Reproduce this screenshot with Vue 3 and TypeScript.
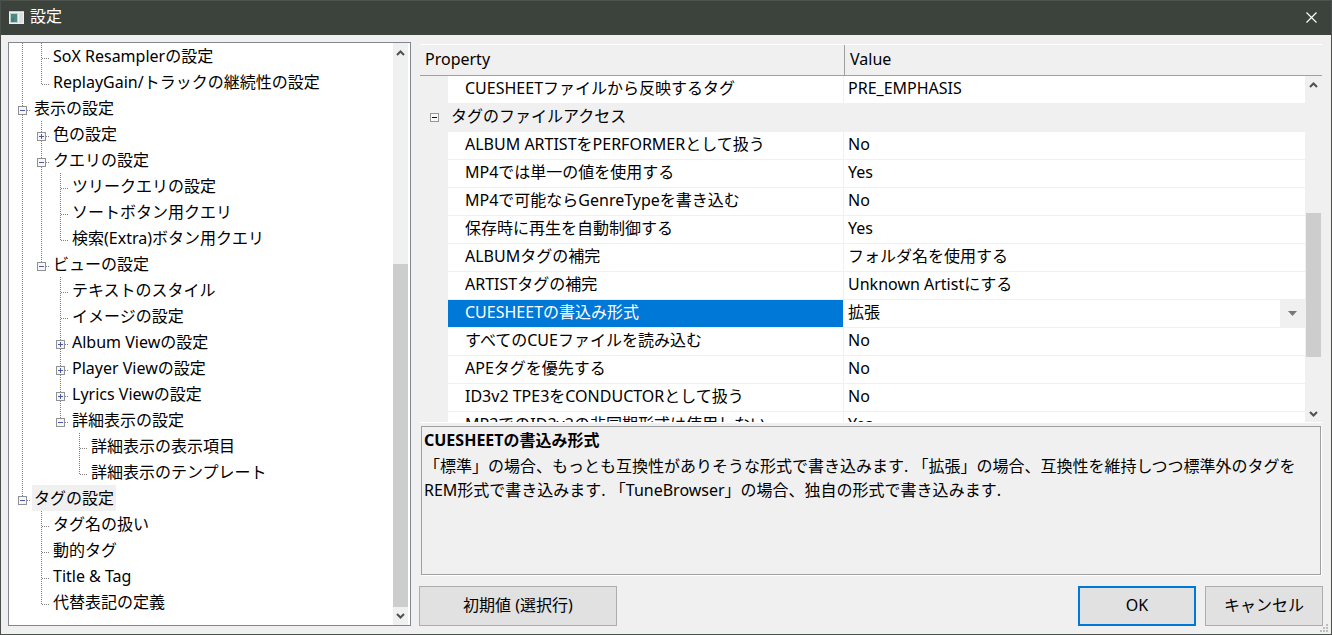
<script setup lang="ts">
import { ref } from 'vue'

type Guide = 'none' | 'line' | 'tee' | 'end' | 'plus' | 'minus' | 'minus-end'

interface TreeNode {
  label: string
  guides: Guide[]
}

interface PropertyRow {
  name: string
  value: string
}

const nodes: TreeNode[] = [
  { label: 'SoX Resamplerの設定', guides: ['line', 'tee'] },
  { label: 'ReplayGain/トラックの継続性の設定', guides: ['line', 'end'] },
  { label: '表示の設定', guides: ['minus'] },
  { label: '色の設定', guides: ['line', 'plus'] },
  { label: 'クエリの設定', guides: ['line', 'minus'] },
  { label: 'ツリークエリの設定', guides: ['line', 'line', 'tee'] },
  { label: 'ソートボタン用クエリ', guides: ['line', 'line', 'tee'] },
  { label: '検索(Extra)ボタン用クエリ', guides: ['line', 'line', 'end'] },
  { label: 'ビューの設定', guides: ['line', 'minus-end'] },
  { label: 'テキストのスタイル', guides: ['line', 'none', 'tee'] },
  { label: 'イメージの設定', guides: ['line', 'none', 'tee'] },
  { label: 'Album Viewの設定', guides: ['line', 'none', 'plus'] },
  { label: 'Player Viewの設定', guides: ['line', 'none', 'plus'] },
  { label: 'Lyrics Viewの設定', guides: ['line', 'none', 'plus'] },
  { label: '詳細表示の設定', guides: ['line', 'none', 'minus-end'] },
  { label: '詳細表示の表示項目', guides: ['line', 'none', 'none', 'tee'] },
  { label: '詳細表示のテンプレート', guides: ['line', 'none', 'none', 'end'] },
  { label: 'タグの設定', guides: ['minus-end'] },
  { label: 'タグ名の扱い', guides: ['none', 'tee'] },
  { label: '動的タグ', guides: ['none', 'tee'] },
  { label: 'Title & Tag', guides: ['none', 'tee'] },
  { label: '代替表記の定義', guides: ['none', 'end'] },
]

const rowsBefore: PropertyRow[] = [
  { name: 'CUESHEETファイルから反映するタグ', value: 'PRE_EMPHASIS' },
]

const rows: PropertyRow[] = [
  { name: 'ALBUM ARTISTをPERFORMERとして扱う', value: 'No' },
  { name: 'MP4では単一の値を使用する', value: 'Yes' },
  { name: 'MP4で可能ならGenreTypeを書き込む', value: 'No' },
  { name: '保存時に再生を自動制御する', value: 'Yes' },
  { name: 'ALBUMタグの補完', value: 'フォルダ名を使用する' },
  { name: 'ARTISTタグの補完', value: 'Unknown Artistにする' },
  { name: 'CUESHEETの書込み形式', value: '拡張' },
  { name: 'すべてのCUEファイルを読み込む', value: 'No' },
  { name: 'APEタグを優先する', value: 'No' },
  { name: 'ID3v2 TPE3をCONDUCTORとして扱う', value: 'No' },
  { name: 'MP3でのID3v2の非同期形式は使用しない', value: 'Yes' },
]

const selectedNode = ref('タグの設定')
const selectedRow = ref('CUESHEETの書込み形式')
const format = ref('拡張')

const isBox = (g: Guide) => g === 'plus' || g === 'minus' || g === 'minus-end'
const isEnd = (g: Guide) => g === 'end' || g === 'minus-end'
</script>

<template>
  <div class="window">
    <header class="titlebar">
      <svg class="app-icon" width="15" height="13" viewBox="0 0 15 13" aria-hidden="true">
        <rect width="15" height="13" fill="#eef1ef" />
        <rect x="1" y="2" width="8" height="10" fill="#b9cfc9" />
        <rect x="2" y="3" width="6" height="8" fill="#4d8a80" />
        <rect x="2" y="7" width="3" height="4" fill="#457a8c" />
        <rect x="10" y="2" width="4" height="10" fill="#dcdfe2" />
        <rect width="15" height="1" fill="#c3cac6" />
      </svg>
      <h1>設定</h1>
      <button class="close" type="button" aria-label="閉じる">
        <svg width="11" height="11" viewBox="0 0 11 11">
          <path d="M0.5 0.5 10.5 10.5M10.5 0.5 0.5 10.5" stroke="#fff" stroke-width="1.2" />
        </svg>
      </button>
    </header>

    <main class="content">
      <nav class="tree-box">
        <ul class="tree">
          <li v-for="node in nodes" :key="node.label">
            <template v-for="(g, i) in node.guides" :key="i">
              <component
                :is="isBox(g) ? 'button' : 'span'"
                class="guide"
                :type="isBox(g) ? 'button' : undefined"
                :aria-label="isBox(g) ? node.label + 'の開閉' : undefined"
              >
                <svg width="19" height="26" viewBox="0 0 19 26" fill="none">
                  <g stroke="#808080" stroke-dasharray="1 1">
                    <path v-if="g !== 'none'" :d="isEnd(g) ? 'M9.5 0V16' : 'M9.5 0V26'" />
                    <path v-if="g !== 'none' && g !== 'line'" d="M10 15.5H18" />
                  </g>
                  <g v-if="isBox(g)">
                    <rect x="5.5" y="11.5" width="8" height="8" fill="#f6f6f6" stroke="#919191" />
                    <path d="M7 15.5H12" stroke="#4b5aa3" />
                    <path v-if="g === 'plus'" d="M9.5 13V18" stroke="#4b5aa3" />
                  </g>
                </svg>
              </component>
            </template>
            <button
              type="button"
              class="node"
              :class="{ current: node.label === selectedNode }"
              @click="selectedNode = node.label"
            >{{ node.label }}</button>
          </li>
        </ul>
        <div class="scrollbar tree-scroll" aria-hidden="true">
          <svg class="arrow" viewBox="0 0 15 18"><path d="M4 12 7.5 8.5 11 12" /></svg>
          <div class="track">
            <span class="tree-before"></span><span class="tree-thumb"></span>
          </div>
          <svg class="arrow" viewBox="0 0 15 18"><path d="M4 7 7.5 10.5 11 7" /></svg>
        </div>
      </nav>

      <section class="side">
        <div class="properties">
          <div class="viewport">
            <table>
              <colgroup>
                <col class="c-gutter" /><col class="c-name" /><col />
              </colgroup>
              <thead>
                <tr><th colspan="2" scope="col">Property</th><th scope="col">Value</th></tr>
              </thead>
              <tbody>
                <tr v-for="row in rowsBefore" :key="row.name">
                  <td class="gutter"></td>
                  <td class="name">{{ row.name }}</td>
                  <td class="value">{{ row.value }}</td>
                </tr>
                <tr class="group">
                  <td class="gutter">
                    <button type="button" class="fold" aria-label="タグのファイルアクセスの開閉">
                      <svg width="9" height="9" viewBox="0 0 9 9">
                        <rect x="0.5" y="0.5" width="8" height="8" fill="#f7f7f7" stroke="#989898" />
                        <path d="M2 4.5H7" stroke="#111" />
                      </svg>
                    </button>
                  </td>
                  <th colspan="2" scope="rowgroup">タグのファイルアクセス</th>
                </tr>
                <tr
                  v-for="row in rows"
                  :key="row.name"
                  :class="{ selected: row.name === selectedRow }"
                >
                  <td class="gutter"></td>
                  <td class="name">
                    <label v-if="row.name === selectedRow" for="format">{{ row.name }}</label>
                    <template v-else>{{ row.name }}</template>
                  </td>
                  <td class="value">
                    <div v-if="row.name === selectedRow" class="combo">
                      <select id="format" v-model="format">
                        <option>標準</option>
                        <option>拡張</option>
                        <option>TuneBrowser</option>
                      </select>
                      <span class="drop">
                        <svg width="9" height="5" viewBox="0 0 9 5"><path d="M0 0H9L4.5 5Z" fill="#777" /></svg>
                      </span>
                    </div>
                    <template v-else>{{ row.value }}</template>
                  </td>
                </tr>
              </tbody>
            </table>
          </div>
          <div class="rail">
            <div class="corner"></div>
            <div class="scrollbar" aria-hidden="true">
              <svg class="arrow" viewBox="0 0 15 18"><path d="M4 11 7.5 7.5 11 11" /></svg>
              <div class="track">
                <span class="list-before"></span><span class="list-thumb"></span><span class="list-after"></span>
              </div>
              <svg class="arrow" viewBox="0 0 15 18"><path d="M4 8 7.5 11.5 11 8" /></svg>
            </div>
          </div>
        </div>

        <article class="description">
          <h2>CUESHEETの書込み形式</h2>
          <p>「標準」の場合、もっとも互換性がありそうな形式で書き込みます. 「拡張」の場合、互換性を維持しつつ標準外のタグをREM形式で書き込みます. 「TuneBrowser」の場合、独自の形式で書き込みます.</p>
        </article>

        <footer class="actions">
          <button type="button" class="push reset">初期値 (選択行)</button>
          <button type="button" class="push primary">OK</button>
          <button type="button" class="push">キャンセル</button>
        </footer>
      </section>
    </main>

    <svg class="grip" width="8" height="8" viewBox="0 0 8 8" fill="#bdbdbd" aria-hidden="true">
      <path d="M6 0h2v2H6zM3 3h2v2H3zM6 3h2v2H6zM0 6h2v2H0zM3 6h2v2H3zM6 6h2v2H6z" />
    </svg>
  </div>
</template>

<style>
body {
  margin: 0;
}
</style>

<style scoped>
.window {
  position: relative;
  box-sizing: border-box;
  display: flex;
  flex-direction: column;
  height: 100vh;
  border: 1px solid #4a504b;
  border-top: 0;
  background: #f0f0f0;
  color: #000;
  font: 16px/26px 'Noto Sans', 'Noto Sans CJK JP', sans-serif;
  text-spacing-trim: space-all;
  overflow: hidden;
}

button,
select {
  font: inherit;
  color: inherit;
  margin: 0;
  padding: 0;
  border: 0;
  border-radius: 0;
  background: none;
}

svg {
  display: block;
}

.titlebar {
  flex: none;
  display: flex;
  align-items: center;
  box-sizing: border-box;
  height: 35px;
  padding: 0 14px 2px 8px;
  border-top: 1px solid #4d544e;
  background: #3c423c;
  color: #fff;
}

.titlebar h1 {
  flex: 1;
  margin: 0 0 2px 6px;
  font-size: 16px;
  font-weight: 400;
}

.content {
  flex: 1;
  min-height: 0;
  display: grid;
  grid-template-columns: 403fr 904fr;
  gap: 8px;
  padding: 7px 8px 8px 7px;
}

.tree-box {
  display: flex;
  min-width: 0;
  min-height: 0;
  box-sizing: border-box;
  border: 1px solid #828790;
  background: #fff;
  overflow: hidden;
}

.tree {
  flex: 1;
  min-width: 0;
  margin: 0;
  padding: 0 0 0 4px;
  list-style: none;
  overflow: hidden;
}

.tree li {
  display: flex;
  height: 26px;
  white-space: nowrap;
}

.guide {
  flex: none;
  width: 19px;
  height: 26px;
}

.node {
  padding: 0 2px;
  line-height: 26px;
}

.node.current {
  background: #f0f0f0;
}

.scrollbar {
  flex: none;
  display: flex;
  flex-direction: column;
  width: 15px;
  background: #f0f0f0;
}

.tree-scroll {
  margin-right: 2px;
}

.arrow {
  flex: none;
  width: 15px;
  height: 18px;
  fill: none;
  stroke: #505050;
  stroke-width: 2;
}

.track {
  flex: 1;
  display: flex;
  flex-direction: column;
}

.tree-before {
  flex: 203;
}

.tree-thumb {
  flex: 344;
  background: #cdcdcd;
}

.list-before {
  flex: 119;
}

.list-thumb {
  flex: 144;
  background: #cdcdcd;
}

.list-after {
  flex: 47;
}

.side {
  display: flex;
  flex-direction: column;
  min-width: 0;
  min-height: 0;
}

.properties {
  flex: 1;
  display: flex;
  min-height: 0;
  margin: 2px 1px 0;
  border-top: 1px solid #fff;
  border-bottom: 1px solid #fff;
}

.viewport {
  flex: 1;
  min-width: 0;
  overflow: hidden;
}

.rail {
  display: flex;
  flex-direction: column;
  width: 17px;
}

.rail .scrollbar {
  flex: 1;
  margin-left: 1px;
}

.corner {
  box-sizing: border-box;
  height: 31px;
  border-bottom: 1px solid #a0a0a0;
}

table {
  width: 100%;
  table-layout: fixed;
  border-collapse: separate;
  border-spacing: 0;
}

.c-gutter {
  width: 28px;
}

.c-name {
  width: 396px;
}

th,
td {
  box-sizing: border-box;
  height: 28px;
  padding: 0;
  font-weight: 400;
  line-height: 24px;
  text-align: left;
  white-space: nowrap;
  overflow: hidden;
}

tbody td {
  border-bottom: 1px solid #f0f0f0;
  background: #fff;
}

thead th {
  height: 31px;
  padding: 0 5px 2px;
  border-bottom: 1px solid #a0a0a0;
}

thead th:last-child {
  border-left: 1px solid #a0a0a0;
}

tbody .gutter {
  background: #f0f0f0;
}

.group th {
  padding: 0 0 4px 3px;
}

.fold {
  display: block;
  margin: 0 0 0 10px;
}

.name {
  padding: 0 0 3px 17px;
  border-right: 1px solid #f0f0f0;
}

.value {
  padding: 0 0 3px 4px;
}

.selected .name {
  background: #0078d7;
  background-clip: padding-box;
  color: #fff;
}

.selected .value {
  padding-bottom: 0;
}

.combo {
  display: flex;
  height: 27px;
}

.combo select {
  flex: 1;
  min-width: 0;
  height: 24px;
  appearance: none;
  outline: 0;
}

.drop {
  display: flex;
  align-items: center;
  justify-content: center;
  width: 25px;
  background: #f0f0f0;
  pointer-events: none;
}

.description {
  flex: none;
  box-sizing: border-box;
  height: 149px;
  margin: 3px 2px 11px;
  padding: 1px 2px;
  border: 1px solid #a0a0a0;
  box-shadow: 1px 1px #fff;
  overflow: hidden;
}

.description h2 {
  margin: 0;
  font-size: 16px;
  font-weight: 700;
  line-height: 24px;
}

.description p {
  margin: 2px 0 0;
  line-height: 24px;
}

.actions {
  flex: none;
  display: flex;
  gap: 9px;
}

.push {
  box-sizing: border-box;
  width: 118px;
  height: 40px;
  padding-bottom: 2px;
  border: 1px solid #adadad;
  background: #e1e1e1;
}

.push.reset {
  width: 198px;
  margin-right: auto;
}

.push.primary {
  border: 2px solid #0078d7;
}

.grip {
  position: absolute;
  right: 3px;
  bottom: 2px;
}
</style>
